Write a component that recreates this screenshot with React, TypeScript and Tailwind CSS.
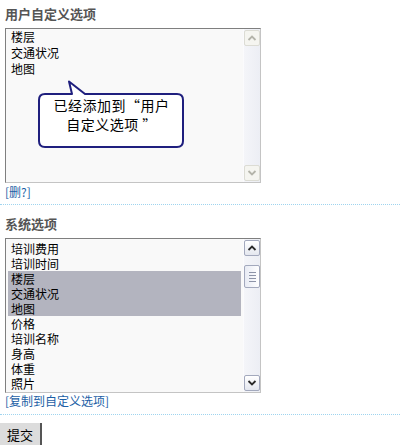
import React from "react";

const systemOptions = [
  { label: "培训费用", selected: false },
  { label: "培训时间", selected: false },
  { label: "楼层", selected: true },
  { label: "交通状况", selected: true },
  { label: "地图", selected: true },
  { label: "价格", selected: false },
  { label: "培训名称", selected: false },
  { label: "身高", selected: false },
  { label: "体重", selected: false },
  { label: "照片", selected: false },
];

const customOptions = ["楼层", "交通状况", "地图"];

const Arrow = ({ dir, active }: { dir: "up" | "down"; active: boolean }) => (
  <svg width="10" height="8" viewBox="0 0 10 8">
    <path
      d={dir === "up" ? "M1.5 6 L5 2.5 L8.5 6" : "M1.5 2 L5 5.5 L8.5 2"}
      fill="none"
      stroke={active ? "#2a2a2a" : "#b4b4aa"}
      strokeWidth="1.8"
    />
  </svg>
);

const ScrollButton = ({ dir, active }: { dir: "up" | "down"; active: boolean }) => (
  <div
    className={`w-[16px] h-[16px] rounded-[2px] border flex items-center justify-center ${
      active
        ? "border-[#a3a9bd] bg-gradient-to-b from-[#ffffff] to-[#e4e7ef]"
        : "border-[#dcdcd4] bg-[#f5f5f0]"
    }`}
  >
    <Arrow dir={dir} active={active} />
  </div>
);

// fake scrollbar, drawn like the old XP-style one in the shot
const ScrollBar = ({ active }: { active: boolean }) => (
  <div className="w-[17px] h-full flex flex-col items-center py-[1px] bg-gradient-to-r from-[#f4f5f9] to-[#eceef4] border-l border-[#fbfbfd]">
    <ScrollButton dir="up" active={active} />
    {active && (
      <div className="mt-[9px] w-[16px] h-[23px] rounded-[2px] border border-[#a3a9bd] bg-gradient-to-r from-[#e8ebf4] to-[#ffffff] flex flex-col items-center justify-center gap-[2px]">
        <div className="w-[7px] h-[1px] bg-[#8d94a8]" />
        <div className="w-[7px] h-[1px] bg-[#8d94a8]" />
        <div className="w-[7px] h-[1px] bg-[#8d94a8]" />
        <div className="w-[7px] h-[1px] bg-[#8d94a8]" />
      </div>
    )}
    <div className="flex-1" />
    <ScrollButton dir="down" active={active} />
  </div>
);

export default function App() {
  return (
    <div className="w-[400px] h-[445px] bg-white overflow-hidden font-['Noto_Sans_CJK_SC','Noto_Sans_CJK_JP',sans-serif] text-black">
      {/* 用户自定义选项 */}
      <div className="px-[5px] pt-[6px]">
        <h3 className="text-[13px] leading-[15px] font-bold text-[#555555]">用户自定义选项</h3>
        <div className="relative mt-[7px] w-[256px] h-[155px] border border-[#7f7f7f] border-r-[#c4c4c4] border-b-[#c4c4c4] flex">
          <div className="flex-1 bg-[#f9f9f9] pl-[5px] text-[12px] leading-[16px]">
            {customOptions.map((o) => (
              <div key={o}>{o}</div>
            ))}
          </div>
          <ScrollBar active={false} />

          {/* tooltip bubble */}
          <div className="absolute left-[32px] top-[51px] w-[147px] h-[69px]">
            <svg width="147" height="69" viewBox="0 0 147 69" className="absolute inset-0">
              <path
                d="M7 14 L34 14 L31 1.5 L47 14 L139 14 Q145 14 145 20 L145 61 Q145 67 139 67 L7 67 Q1 67 1 61 L1 20 Q1 14 7 14 Z"
                fill="#ffffff"
                stroke="#1f1f7e"
                strokeWidth="2"
                strokeLinejoin="round"
              />
            </svg>
            <div className="absolute left-0 right-0 top-[16px] text-center text-[14px] leading-[19px] tracking-[0.5px] text-black">
              <div>已经添加到“用户</div>
              <div>自定义选项 ”</div>
            </div>
          </div>
        </div>
        <a className="block mt-[2px] text-[12px] leading-[14px] text-[#1d5fa6]">[删?]</a>
      </div>

      <div className="mt-[5px] h-0 border-t border-dotted border-t-[#9fd4ef]" />

      {/* 系统选项 */}
      <div className="px-[5px] pt-[11px]">
        <h3 className="text-[13px] leading-[15px] font-bold text-[#555555]">系统选项</h3>
        <div className="mt-[7px] w-[256px] h-[155px] border border-[#7f7f7f] border-r-[#c4c4c4] border-b-[#c4c4c4] flex">
          <div className="flex-1 bg-[#f9f9f9] p-[2px] text-[12px] leading-[15px]">
            {systemOptions.map((o) => (
              <div key={o.label} className={`h-[15px] pl-[3px] ${o.selected ? "bg-[#b3b4bf]" : ""}`}>
                {o.label}
              </div>
            ))}
          </div>
          <ScrollBar active={true} />
        </div>
        <a className="block mt-[1px] text-[12px] leading-[14px] text-[#1d5fa6]">[复制到自定义选项]</a>
      </div>

      <div className="mt-[6px] h-0 border-t border-dotted border-t-[#9fd4ef]" />

      <button className="mt-[8px] w-[42px] h-[24px] bg-[#dcdcdc] border-r-2 border-[#555555] text-[13px] leading-[24px] text-black">
        提交
      </button>
    </div>
  );
}
